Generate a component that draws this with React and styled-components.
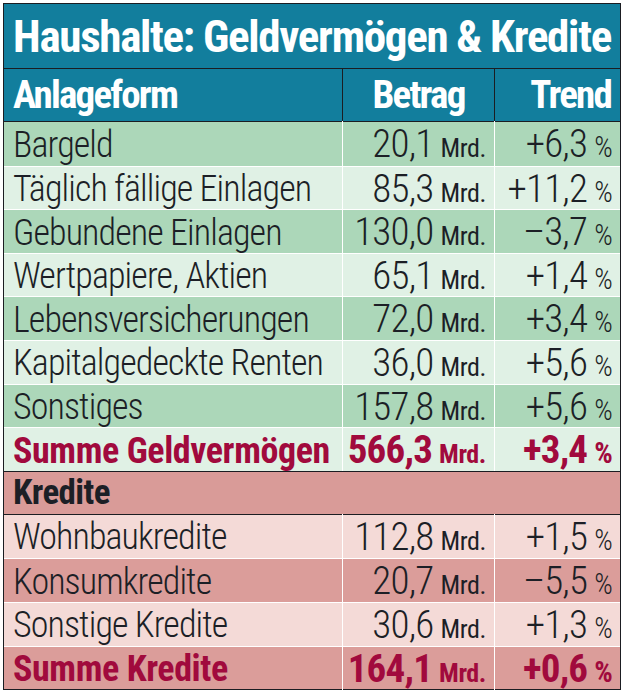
import React from "react"
import styled, { createGlobalStyle } from "styled-components"

const GlobalStyle = createGlobalStyle`
  body {
    margin: 0;
    background: #fff;
  }
`

const COLS = "338px 152px 126px"
const FONT = `"Roboto Condensed", "Open Sans", sans-serif`

const tones = {
  greenDark: "#acd7b9",
  greenLight: "#e0f1e5",
  pinkDark: "#db9d9a",
  pinkLight: "#f4dad7",
}

const rows = [
  { label: "Bargeld", value: "20,1", trend: "+6,3", tone: "greenDark" },
  { label: "Täglich fällige Einlagen", value: "85,3", trend: "+11,2", tone: "greenLight" },
  { label: "Gebundene Einlagen", value: "130,0", trend: "–3,7", tone: "greenDark" },
  { label: "Wertpapiere, Aktien", value: "65,1", trend: "+1,4", tone: "greenLight" },
  { label: "Lebensversicherungen", value: "72,0", trend: "+3,4", tone: "greenDark" },
  { label: "Kapitalgedeckte Renten", value: "36,0", trend: "+5,6", tone: "greenLight" },
  { label: "Sonstiges", value: "157,8", trend: "+5,6", tone: "greenDark" },
  { label: "Summe Geldvermögen", value: "566,3", trend: "+3,4", tone: "greenLight", sum: true },
]

const credits = [
  { label: "Wohnbaukredite", value: "112,8", trend: "+1,5", tone: "pinkLight" },
  { label: "Konsumkredite", value: "20,7", trend: "–5,5", tone: "pinkDark" },
  { label: "Sonstige Kredite", value: "30,6", trend: "+1,3", tone: "pinkLight" },
  { label: "Summe Kredite", value: "164,1", trend: "+0,6", tone: "pinkDark", sum: true },
]

const Row = ({ r }) => (
  <DataRow $tone={r.tone} $sum={r.sum}>
    <Label $sum={r.sum}>{r.label}</Label>
    <Num>
      {r.value}
      <Unit $sum={r.sum}>Mrd.</Unit>
    </Num>
    <Num>
      {r.trend}
      <Percent $sum={r.sum}>%</Percent>
    </Num>
  </DataRow>
)

const App = () => {
  return (
    <Page>
      <GlobalStyle />
      <Table>
        <Title>Haushalte: Geldvermögen &amp; Kredite</Title>
        <HeadRow>
          <HeadCell>Anlageform</HeadCell>
          <HeadCell $align='center'>Betrag</HeadCell>
          <HeadCell $align='right'>Trend</HeadCell>
        </HeadRow>

        <Group>
          {rows.map((r) => (
            <Row key={r.label} r={r} />
          ))}
        </Group>

        <SectionRow>Kredite</SectionRow>

        <Group>
          {credits.map((r) => (
            <Row key={r.label} r={r} />
          ))}
        </Group>
      </Table>
    </Page>
  )
}

export default App

const Page = styled.div`
  padding: 3px 0 0 3px;
  width: 625px;
  height: 694px;
  box-sizing: border-box;
  font-family: ${FONT};
`

const Table = styled.div`
  width: 616px;
  border: 1.5px solid #1b1d22;
  display: flex;
  flex-direction: column;
`

const Title = styled.div`
  height: 64px;
  background: #127e9d;
  color: #fff;
  font-weight: 700;
  font-size: 45px;
  letter-spacing: -1.3px;
  display: flex;
  align-items: center;
  justify-content: center;
  border-bottom: 1.5px solid #1b1d22;
  white-space: nowrap;
`

const HeadRow = styled.div`
  height: 52px;
  display: grid;
  grid-template-columns: ${COLS};
  background: #127e9d;
  border-bottom: 1.5px solid #1b1d22;
`

const HeadCell = styled.div`
  color: #fff;
  font-weight: 700;
  font-size: 39px;
  letter-spacing: -1.8px;
  display: flex;
  align-items: center;
  padding: 0 9px;
  justify-content: ${(p) =>
    p.$align === "center" ? "center" : p.$align === "right" ? "flex-end" : "flex-start"};
  & + & {
    border-left: 1.5px solid #1b1d22;
  }
`

const Group = styled.div`
  display: flex;
  flex-direction: column;
`

const DataRow = styled.div`
  height: 43.6px;
  box-sizing: border-box;
  display: grid;
  grid-template-columns: ${COLS};
  background: ${(p) => tones[p.$tone]};
  color: ${(p) => (p.$sum ? "#a10a3d" : "#1c1f26")};
  font-weight: ${(p) => (p.$sum ? 700 : 300)};
  & + & {
    border-top: 1.5px solid #fff;
  }
  > * + * {
    border-left: 1.5px solid #fff;
  }
`

const Label = styled.div`
  font-size: 36px;
  letter-spacing: ${(p) => (p.$sum ? "-0.4px" : "-0.9px")};
  display: flex;
  align-items: center;
  padding: 0 9px;
  white-space: nowrap;
`

const Num = styled.div`
  font-size: 39px;
  letter-spacing: -0.8px;
  display: flex;
  align-items: baseline;
  justify-content: flex-end;
  padding: 0 8px;
  margin-top: -1px;
  white-space: nowrap;
`

const Unit = styled.span`
  font-size: 26px;
  letter-spacing: -0.4px;
  font-weight: ${(p) => (p.$sum ? 700 : 400)};
  margin-left: 7px;
`

const Percent = styled.span`
  font-size: 29px;
  font-weight: ${(p) => (p.$sum ? 700 : 300)};
  margin-left: 7px;
`

const SectionRow = styled.div`
  height: 44px;
  box-sizing: border-box;
  background: #d99b98;
  color: #1c1f26;
  font-weight: 700;
  font-size: 35px;
  letter-spacing: -0.6px;
  display: flex;
  align-items: center;
  padding: 0 9px;
  border-top: 1.5px solid #1b1d22;
  border-bottom: 1.5px solid #1b1d22;
`
